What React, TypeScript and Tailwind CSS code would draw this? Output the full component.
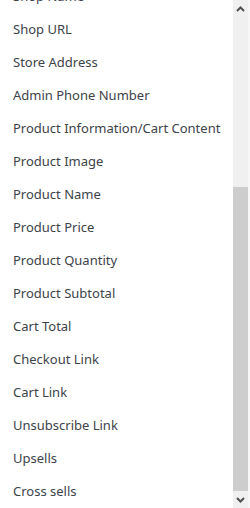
import React from "react";

const items = [
  "Shop Name",
  "Shop URL",
  "Store Address",
  "Admin Phone Number",
  "Product Information/Cart Content",
  "Product Image",
  "Product Name",
  "Product Price",
  "Product Quantity",
  "Product Subtotal",
  "Cart Total",
  "Checkout Link",
  "Cart Link",
  "Unsubscribe Link",
  "Upsells",
  "Cross sells",
];

export default function App() {
  return (
    <div className="flex h-[508px] w-[250px] overflow-hidden bg-white font-['Noto_Sans','Open_Sans',sans-serif]">
      <div className="flex-1 overflow-hidden">
        <ul className="-mt-[20px]">
          {items.map((item) => (
            <li
              key={item}
              className="flex h-[33px] items-center whitespace-nowrap pl-[13px] text-[13px] text-[#3c434a]"
            >
              {item}
            </li>
          ))}
        </ul>
      </div>
      {/* fake scrollbar */}
      <div className="flex w-[15px] flex-col bg-[#f0f0f0]">
        <div className="flex h-[17px] items-center justify-center">
          <svg width="9" height="6" viewBox="0 0 9 6">
            <path d="M1 5 L4.5 1.5 L8 5" fill="none" stroke="#505050" strokeWidth="2" />
          </svg>
        </div>
        <div className="flex flex-1 flex-col">
          <div className="h-[170px]" />
          <div className="flex-1 bg-[#cdcdcd]" />
        </div>
        <div className="flex h-[17px] items-center justify-center">
          <svg width="9" height="6" viewBox="0 0 9 6">
            <path d="M1 1 L4.5 4.5 L8 1" fill="none" stroke="#505050" strokeWidth="2" />
          </svg>
        </div>
      </div>
      <div className="w-[2px] bg-[#f7f7f7]" />
    </div>
  );
}
